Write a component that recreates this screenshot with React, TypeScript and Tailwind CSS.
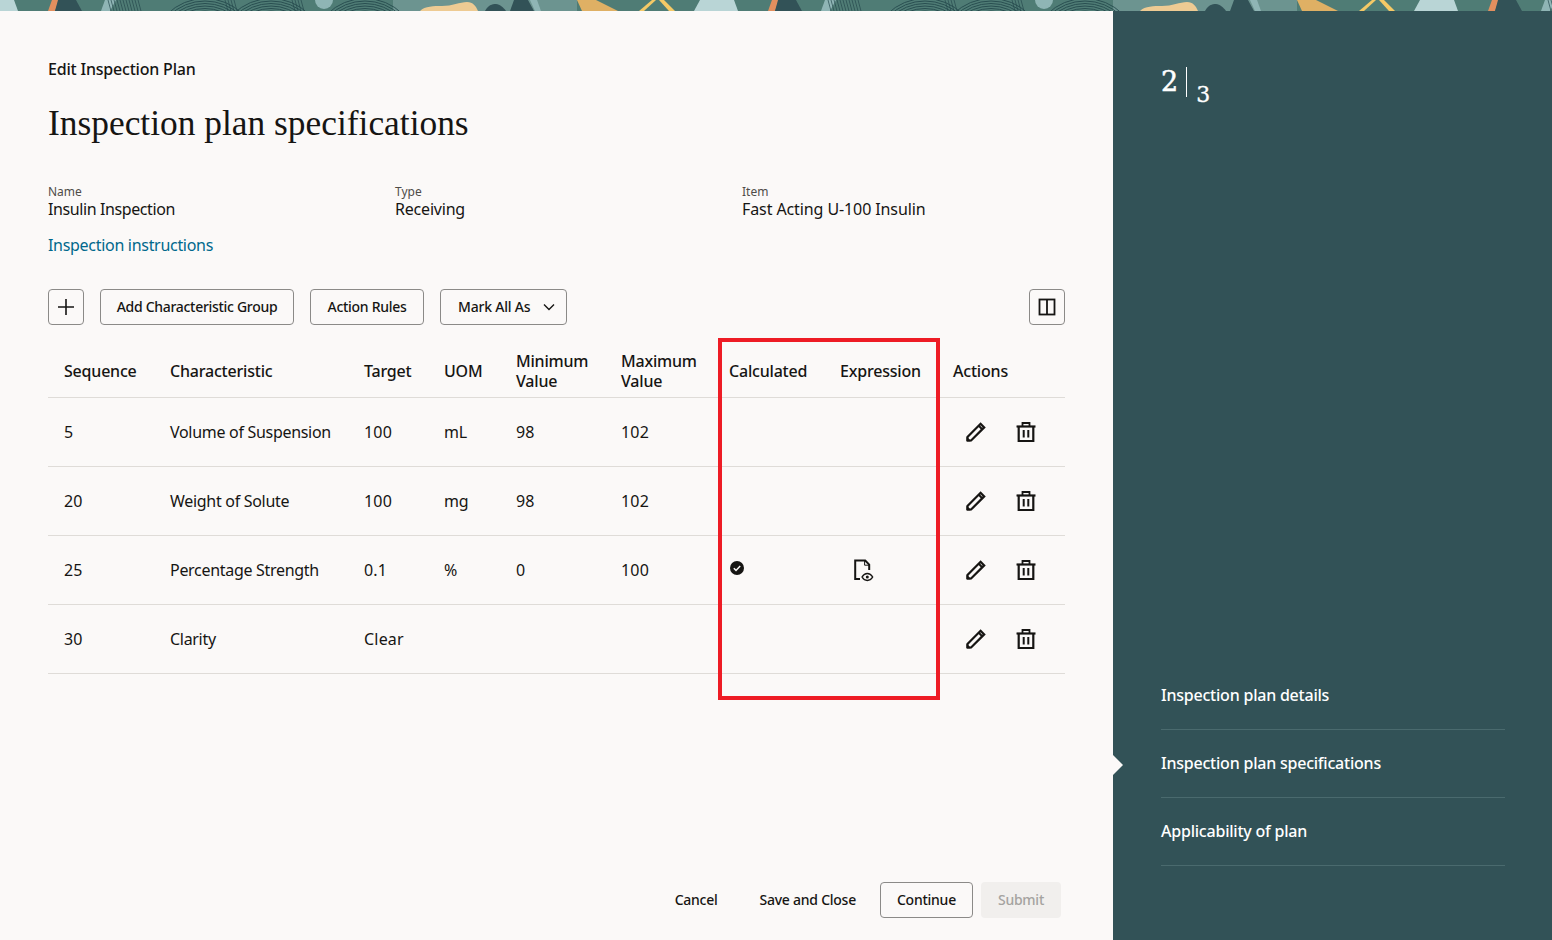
const rows = [
  { seq: "5", name: "Volume of Suspension", target: "100", uom: "mL", min: "98", max: "102" },
  { seq: "20", name: "Weight of Solute", target: "100", uom: "mg", min: "98", max: "102" },
  { seq: "25", name: "Percentage Strength", target: "0.1", uom: "%", min: "0", max: "100", calculated: true },
  { seq: "30", name: "Clarity", target: "Clear", uom: "", min: "", max: "" },
];

const steps = ["Inspection plan details", "Inspection plan specifications", "Applicability of plan"];

const meta = [
  { label: "Name", value: "Insulin Inspection", cls: "tracking-[-0.4px]" },
  { label: "Type", value: "Receiving", cls: "tracking-[-0.2px]" },
  { label: "Item", value: "Fast Acting U-100 Insulin", cls: "tracking-[-0.1px]" },
];

const tableCols =
  "grid grid-cols-[106px_194px_80px_72px_105px_108px_111px_113px_128px] border-b border-[#dfdcd8]";

function Fingerprint({ cx }: { cx: number }) {
  return (
    <g fill="none" stroke="#24484c" strokeWidth="0.9">
      {[41, 43.500, 46, 48.500, 51, 53.500].map((r) => (
        <circle key={r} cx={cx} cy={52} r={r} />
      ))}
    </g>
  );
}

function Triangle({ x }: { x: number }) {
  return <polygon points={`${x - 20},0 ${x + 14},0 ${x + 18},11 ${x - 26},11`} fill="#b9d5d6" />;
}

function Banner() {
  return (
    <svg className="block h-[11px] w-full shrink-0" viewBox="0 0 1552 11" aria-hidden="true">
      <defs>
        <pattern id="tile" width="720" height="11" patternUnits="userSpaceOnUse">
          <rect width="720" height="11" fill="#4f7c75" />
          <Triangle x={0} />
          <Triangle x={720} />
          <polygon points="52,0 59,0 55,11 48,11" fill="#e28f5e" />
          <polygon points="58,0 76,0 82,11 55,11" fill="#325257" />
          <polygon points="105,0 116,0 110,11 101,11" fill="#8fb5b5" />
          <rect x="393" width="184" height="11" fill="#6c9490" />
          <Fingerprint cx={205} />
          <Fingerprint cx={271} />
          <Fingerprint cx={365} />
          <g stroke="#24484c" strokeWidth="0.7">
            {[108, 111, 114, 117, 120, 123, 126, 129, 132, 135, 138, 225, 228, 231, 234, 292, 295, 298, 301].map((x) => (
              <line key={x} x1={x} y1="0" x2={x + 3} y2="11" />
            ))}
          </g>
          <circle cx="324" cy="0" r="9" fill="#8fb5b5" />
          <path d="M420 11 C425 6 434 6 442 6 C452 6 460 2 467 2 C473 2 476 6 478 11 Z" fill="#eecb93" />
          <path d="M485 11 C488 5 492 4 496 4 C500 4 504 8 506 11 Z" fill="#325257" />
          <polygon points="514,0 528,0 534,11 510,11" fill="#325257" />
          <polygon points="530,0 537,0 541,11 535,11" fill="#8fb5b5" />
          <polygon points="577,0 596,0 618,11 582,11" fill="#dfb064" />
          <polygon points="652,0 656,0 644,11 639,11" fill="#f5c966" />
          <polygon points="659,0 664,0 675,11 669,11" fill="#f5c966" />
        </pattern>
      </defs>
      <rect width="1552" height="11" fill="url(#tile)" />
    </svg>
  );
}

function PencilIcon() {
  return (
    <svg width="24" height="24" viewBox="0 0 24 24" fill="none" stroke="#161513" strokeWidth="2.200" aria-hidden="true">
      <path d="M3.500 20.500v-3.600L16.600 3.800l3.600 3.600L7.100 20.500Z" />
      <path d="M14.800 5.800l3.400 3.400" strokeWidth="2" />
      <path d="M3 21v-3.500L6.500 21Z" fill="#161513" strokeWidth="1" />
    </svg>
  );
}

function TrashIcon() {
  return (
    <svg width="24" height="24" viewBox="0 0 24 24" fill="none" stroke="#161513" strokeWidth="2.200" aria-hidden="true">
      <path d="M2.500 6.500h19" />
      <path d="M8.500 6.500V3h7v3.500" strokeWidth="1.800" />
      <path d="M4.700 6.500V21h14.600V6.500" />
      <path d="M9.700 10v7.500M14.300 10v7.500" strokeWidth="2" />
    </svg>
  );
}

function ExpressionIcon() {
  return (
    <svg width="24" height="24" viewBox="0 0 24 24" fill="none" stroke="#161513" aria-hidden="true">
      <path d="M9 21H4.200V2.600h10l4 4V12" strokeWidth="2" />
      <path d="M13.600 2.600v4.600h4.600" strokeWidth="1" />
      <path d="M11 19c1.600-2.600 3.400-3.500 5.300-3.500s3.800.9 5.400 3.500c-1.600 2.600-3.500 3.500-5.400 3.500S12.600 21.600 11 19Z" strokeWidth="1.400" />
      <circle cx="16.300" cy="19" r="1.500" fill="#161513" stroke="none" />
    </svg>
  );
}

function CheckIcon() {
  return (
    <svg width="16" height="16" viewBox="0 0 16 16" aria-hidden="true">
      <circle cx="8" cy="8" r="7" fill="#161513" />
      <path d="M4.800 8.300l2.200 2.100 4.200-4.300" fill="none" stroke="#fbf9f8" strokeWidth="1.500" />
    </svg>
  );
}

function ToolbarButton({ children }: { children: React.ReactNode }) {
  return (
    <button className="flex h-9 items-center justify-center rounded-[4px] border border-[#8b8a88] text-sm font-medium tracking-[-0.3px]">
      {children}
    </button>
  );
}

export default function App() {
  return (
    <div className="relative flex h-[940px] w-[1552px] flex-col overflow-hidden bg-[#fbf9f8] font-['Noto_Sans',sans-serif] text-[#161513]">
      <Banner />
      <div className="flex min-h-0 flex-1">
        <main className="flex w-[1113px] shrink-0 flex-col pl-12 pr-12">
          <div className="mt-[47px] text-base leading-[22px] font-medium tracking-[-0.2px]">Edit Inspection Plan</div>
          <h1 className="mt-[23px] font-['Liberation_Serif',serif] text-[35.4px] leading-[40px]">
            Inspection plan specifications
          </h1>

          <div className="mt-[41px] grid grid-cols-[347px_347px_1fr]">
            {meta.map((m) => (
              <div key={m.label}>
                <div className="text-xs leading-[15px] text-[#4f4c48]">{m.label}</div>
                <div className={`text-base leading-5 ${m.cls}`}>{m.value}</div>
              </div>
            ))}
          </div>
          <a className="mt-[15px] text-base leading-[22px] tracking-[-0.3px] text-[#00688c]">Inspection instructions</a>

          <div className="mt-[33px] flex gap-4">
            <ToolbarButton>
              <span className="flex w-[34px] items-center justify-center">
                <svg width="20" height="20" viewBox="0 0 20 20" stroke="#161513" strokeWidth="1.600" aria-hidden="true">
                  <path d="M10 2v16M2 10h16" />
                </svg>
              </span>
            </ToolbarButton>
            <ToolbarButton>
              <span className="w-[192px]">Add Characteristic Group</span>
            </ToolbarButton>
            <ToolbarButton>
              <span className="w-[112px]">Action Rules</span>
            </ToolbarButton>
            <ToolbarButton>
              <span className="flex w-[125px] items-center gap-[12px] pl-[17px] tracking-[-0.2px]">
                Mark All As
                <svg width="14" height="14" viewBox="0 0 14 14" fill="none" stroke="#161513" strokeWidth="1.400" aria-hidden="true">
                  <path d="M2 4.500l5 5 5-5" />
                </svg>
              </span>
            </ToolbarButton>
            <div className="ml-auto">
              <ToolbarButton>
                <span className="flex w-[34px] items-center justify-center">
                  <svg width="18" height="18" viewBox="0 0 18 18" fill="none" stroke="#161513" strokeWidth="1.800" aria-hidden="true">
                    <rect x="1.500" y="1.500" width="15" height="15" />
                    <path d="M9 1.500v15" />
                  </svg>
                </span>
              </ToolbarButton>
            </div>
          </div>

          <div className="mt-5">
            <div className={`${tableCols} h-[53px] items-center text-base leading-5 font-medium tracking-[-0.2px]`}>
              <div className="pl-4">Sequence</div>
              <div className="pl-4">Characteristic</div>
              <div className="pl-4">Target</div>
              <div className="pl-4">UOM</div>
              <div className="pl-4">
                Minimum
                <br />
                Value
              </div>
              <div className="pl-4">
                Maximum
                <br />
                Value
              </div>
              <div className="pl-4">Calculated</div>
              <div className="pl-4">Expression</div>
              <div className="pl-4">Actions</div>
            </div>
            {rows.map((r) => (
              <div key={r.seq} className={`${tableCols} h-[69px] items-center text-base tracking-[-0.3px]`}>
                <div className="pl-4 tracking-normal">{r.seq}</div>
                <div className="pl-4">{r.name}</div>
                <div className="pl-4 tracking-[0.2px]">{r.target}</div>
                <div className="pl-4">{r.uom}</div>
                <div className="pl-4 tracking-normal">{r.min}</div>
                <div className="pl-4 tracking-[0.2px]">{r.max}</div>
                <div className="pl-4">{r.calculated && <div className="mb-1"><CheckIcon /></div>}</div>
                <div className="pl-[27px]">{r.calculated && <ExpressionIcon />}</div>
                <div className="flex gap-[26px] pl-[27px]">
                  <PencilIcon />
                  <TrashIcon />
                </div>
              </div>
            ))}
          </div>

          <div className="mt-auto mb-[22px] flex items-center justify-end pr-1 text-sm font-medium tracking-[-0.25px]">
            <button className="h-9">Cancel</button>
            <button className="ml-[42px] h-9">Save and Close</button>
            <button className="ml-[24px] h-9 rounded-[4px] border border-[#8b8a88] px-4">Continue</button>
            <button className="ml-2 h-9 rounded-[4px] bg-[#f1efed] px-[17px] text-[#a5a3a0]">Submit</button>
          </div>
        </main>

        <aside className="relative flex flex-1 flex-col justify-between bg-[#325257] pr-[47px] pb-[74px] pl-12 text-white">
          <div className="mt-14 flex h-[30px] font-['DejaVu_Serif',serif]">
            <span className="mt-[1px] text-[27px] leading-[28px] [-webkit-text-stroke:0.5px_white]">2</span>
            <span className="mx-[8px] w-px bg-white" />
            <span className="mt-[14px] ml-[1px] text-[22px] leading-[28px] [-webkit-text-stroke:0.3px_white]">3</span>
          </div>
          <nav>
            {steps.map((s) => (
              <div key={s} className="flex h-[68px] items-center border-b border-[#4a6a6e] pb-[2px] text-base font-medium tracking-[-0.22px]">
                {s}
              </div>
            ))}
          </nav>
          <div className="absolute top-[744px] left-0 h-5 w-[10px] bg-[#fbf9f8] [clip-path:polygon(0_0,100%_50%,0_100%)]" />
        </aside>
      </div>

      <div className="absolute top-[338px] left-[718px] h-[362px] w-[222px] border-4 border-[#ee1c25]" />
    </div>
  );
}
